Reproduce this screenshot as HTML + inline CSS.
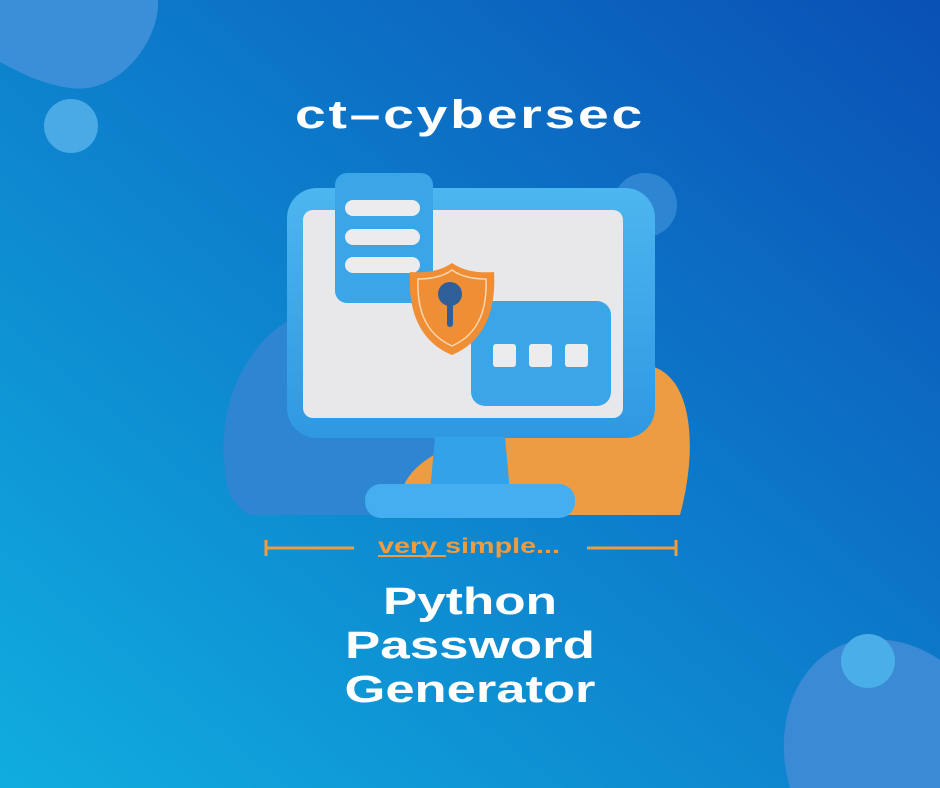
<!DOCTYPE html>
<html><head><meta charset="utf-8"><style>
html,body{margin:0;padding:0;width:940px;height:788px;overflow:hidden}
</style></head><body>
<svg width="940" height="788" viewBox="0 0 940 788" xmlns="http://www.w3.org/2000/svg">
<defs>
<linearGradient id="bg" x1="0" y1="1" x2="1" y2="0">
<stop offset="0" stop-color="#10addf"/><stop offset="0.5" stop-color="#0d7fcc"/><stop offset="1" stop-color="#0a50b5"/>
</linearGradient>
<linearGradient id="fr" x1="0" y1="0" x2="0" y2="1">
<stop offset="0" stop-color="#4cb6f0"/><stop offset="1" stop-color="#2f98e2"/>
</linearGradient>
</defs>
<rect width="940" height="788" fill="url(#bg)"/>
<path d="M0 0 H158 C160 40 120 95 70 88 C40 84 15 70 0 62 Z" fill="#3b8fd8"/>
<circle cx="71" cy="126" r="27" fill="#4aaae6"/>
<path d="M790 788 C770 720 800 650 860 640 C900 636 925 650 940 660 V788 Z" fill="#3a8ad6"/>
<circle cx="868" cy="661" r="27" fill="#4aaee8"/>
<text x="470" y="128" text-anchor="middle" font-family="Liberation Sans, sans-serif" font-weight="bold" font-size="40" fill="#fff" letter-spacing="2" textLength="350" lengthAdjust="spacingAndGlyphs">ct–cybersec</text>
<!-- blobs behind monitor -->
<path d="M225 470 C215 390 260 330 300 315 L300 515 L250 515 C232 505 226 490 225 470 Z" fill="#2e86d2"/>
<path d="M300 315 L440 315 L440 515 L300 515 Z" fill="#2e86d2"/>
<path d="M400 515 C395 480 420 455 470 440 C560 410 600 370 645 365 C690 370 700 440 680 515 Z" fill="#ee9c41"/>
<circle cx="645" cy="205" r="32" fill="#2e86d2"/>
<!-- monitor -->
<rect x="287" y="188" width="368" height="250" rx="30" fill="url(#fr)"/>
<rect x="303" y="210" width="320" height="208" rx="10" fill="#e8e8ea"/>
<path d="M435 437 H505 L510 492 H430 Z" fill="#34a2e8"/>
<rect x="365" y="484" width="210" height="34" rx="16" fill="#45aef0"/>
<!-- doc card -->
<rect x="335" y="173" width="98" height="130" rx="12" fill="#3aa6e8"/>
<rect x="345" y="200" width="75" height="16" rx="8" fill="#ececee"/>
<rect x="345" y="229" width="75" height="16" rx="8" fill="#ececee"/>
<rect x="345" y="257" width="75" height="16" rx="8" fill="#ececee"/>
<!-- password card -->
<rect x="471" y="301" width="140" height="105" rx="14" fill="#3aa6e8"/>
<rect x="493" y="344" width="23" height="23" rx="3" fill="#ececee"/>
<rect x="529" y="344" width="23" height="23" rx="3" fill="#ececee"/>
<rect x="565" y="344" width="23" height="23" rx="3" fill="#ececee"/>
<!-- shield -->
<path d="M452 263 C465 272 480 273 494 272 C496 305 488 340 452 355 C416 340 408 305 410 272 C424 273 439 272 452 263 Z" fill="#ef8e34"/>
<path d="M452 270 C463 278 476 279 486 279 C487 306 481 333 452 346 C423 333 417 306 418 279 C428 279 441 278 452 270 Z" fill="none" stroke="#fbd7b0" stroke-width="1.5"/>
<circle cx="450" cy="294" r="12" fill="#2f5f98"/>
<rect x="447" y="300" width="6" height="27" rx="3" fill="#2f5f98"/>
<!-- dividers -->
<g stroke="#ef9c40" stroke-width="3" fill="none">
<line x1="266" y1="548" x2="354" y2="548"/><line x1="266" y1="540" x2="266" y2="556"/>
<line x1="587" y1="548" x2="676" y2="548"/><line x1="676" y1="540" x2="676" y2="556"/>
<line x1="378" y1="556" x2="446" y2="556" stroke-width="2"/>
</g>
<text x="469" y="553" text-anchor="middle" font-family="Liberation Sans, sans-serif" font-weight="bold" font-size="21" fill="#ef9c40" textLength="182" lengthAdjust="spacingAndGlyphs">very simple...</text>
<g font-family="Liberation Sans, sans-serif" font-weight="bold" font-size="38" fill="#fff" text-anchor="middle">
<text x="470" y="614" textLength="174" lengthAdjust="spacingAndGlyphs">Python</text>
<text x="470" y="658" textLength="250" lengthAdjust="spacingAndGlyphs">Password</text>
<text x="470" y="702" textLength="251" lengthAdjust="spacingAndGlyphs">Generator</text>
</g>
</svg>
</body></html>
